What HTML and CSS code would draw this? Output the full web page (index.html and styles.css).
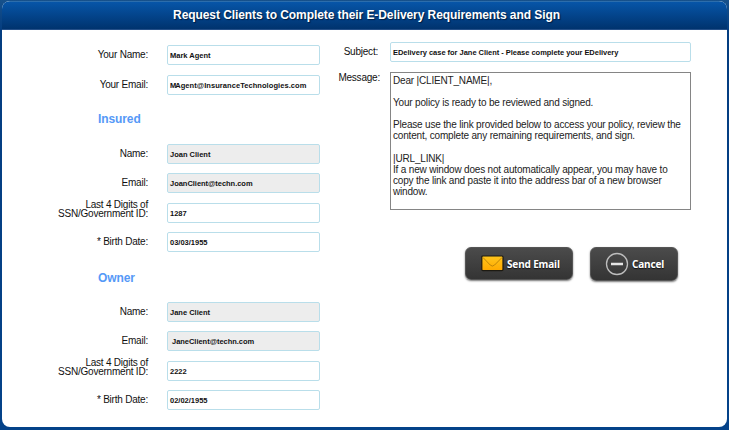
FILE: index.html
```html
<!DOCTYPE html>
<html lang="en">
<head>
<meta charset="utf-8">
<title>Request Clients</title>
<link rel="stylesheet" href="styles.css">
</head>
<body>
<main class="panel">
  <header class="title">Request Clients to Complete their E-Delivery Requirements and Sign</header>
  <div class="content">
    <section class="left">
      <div class="row"><span class="label">Your Name:</span><div class="field"><span class="name">Mark Agent</span></div></div>
      <div class="row"><span class="label">Your Email:</span><div class="field"><span class="agent-mail"><span class="tight">M</span>Agent@InsuranceTechnologies.com</span></div></div>
      <h2>Insured</h2>
      <div class="row"><span class="label">Name:</span><div class="field locked"><span class="name">Joan Client</span></div></div>
      <div class="row"><span class="label">Email:</span><div class="field locked"><span class="mail">JoanClient@techn.com</span></div></div>
      <div class="row"><span class="label two">Last 4 Digits of<br>SSN/Government ID:</span><div class="field"><span>1287</span></div></div>
      <div class="row"><span class="label">* Birth Date:</span><div class="field"><span class="date">03/03/1955</span></div></div>
      <h2 class="owner">Owner</h2>
      <div class="row"><span class="label">Name:</span><div class="field locked"><span class="name">Jane Client</span></div></div>
      <div class="row"><span class="label">Email:</span><div class="field locked indent"><span class="mail">JaneClient@techn.com</span></div></div>
      <div class="row"><span class="label two">Last 4 Digits of<br>SSN/Government ID:</span><div class="field"><span>2222</span></div></div>
      <div class="row"><span class="label">* Birth Date:</span><div class="field"><span class="date">02/02/1955</span></div></div>
    </section>
    <section class="right">
      <div class="subject-row"><span class="label subject-label">Subject:</span><div class="field subject"><span>EDelivery case for Jane Client - Please complete your EDelivery</span></div></div>
      <div class="message-row"><span class="label message-label">Message:</span>
<div class="message">Dear |CLIENT_NAME|,

Your policy is ready to be reviewed and signed.

Please use the link provided below to access your policy, review the
content, complete any remaining requirements, and sign.

|URL_LINK|
If a new window does not automatically appear, you may have to
copy the link and paste it into the address bar of a new browser
window.</div></div>
      <div class="actions">
        <button class="send" type="button">
          <svg width="23" height="17" viewBox="0 0 23 17">
            <defs><linearGradient id="gold" x1="0" y1="0" x2="0" y2="1"><stop offset="0" stop-color="#ffc51c"/><stop offset="1" stop-color="#ffa900"/></linearGradient></defs>
            <rect x=".8" y="1" width="21.2" height="14.6" rx="1" fill="url(#gold)" stroke="#1d1a12" stroke-width="1.2"/>
            <path d="M2 2.5L9.2 10Q11.4 12.2 13.600 10L21 2.500" fill="none" stroke="#b87f08" stroke-width=".9"/>
          </svg>
          <span>Send Email</span>
        </button>
        <button class="cancel" type="button">
          <svg width="24" height="24" viewBox="0 0 24 24"><circle cx="12" cy="12" r="10.500" fill="none" stroke="#bdbdbd" stroke-width="1.300"/><path d="M6 12H18" stroke="#e4e4e4" stroke-width="2.500"/></svg>
          <span>Cancel</span>
        </button>
      </div>
    </section>
  </div>
</main>
</body>
</html>
```
FILE: styles.css
```css
* { box-sizing: border-box; }
body {
  margin: 0;
  height: 430px;
  padding: 1px 2px 3px;
  overflow: hidden;
  background: linear-gradient(#17518b, #043d80 30px, #044289);
  font-family: "Liberation Sans", Arial, sans-serif;
  color: #222;
}
.panel {
  height: 426px;
  background: #fff;
  border-radius: 8px;
  overflow: hidden;
}
.title {
  height: 29px;
  border-top: 1px solid #2c6dac;
  border-bottom: 1px solid #244f88;
  background: linear-gradient(#0755a8, #00336e);
  color: #fff;
  font-size: 12px;
  font-weight: bold;
  letter-spacing: -.08px;
  line-height: 26px;
  text-align: center;
  text-shadow: 1px 1px 1px #001c40;
  padding-left: 4px;
  white-space: nowrap;
}
.content { display: flex; }
.left { width: 318px; padding-top: 15px; }
.row {
  display: grid;
  grid-template-columns: 146px 153px;
  column-gap: 19px;
  height: 29.6px;
}
.label {
  color: #111;
  font-size: 10px;
  letter-spacing: -.22px;
  line-height: 20px;
  text-align: right;
  white-space: nowrap;
}
.two { line-height: 9.500px; margin-top: -3px; }
.field {
  height: 20px;
  padding-left: 2px;
  border: 1px solid #b9deea;
  border-radius: 2px;
  background: #fff;
  font-size: 7.500px;
  font-weight: bold;
  line-height: 19px;
  white-space: nowrap;
  color: #111;
}
.locked { background: #ededed; }
.indent { padding-left: 4px; }
.agent-mail { letter-spacing: .06px; }
.mail { letter-spacing: -.03px; }
.tight { letter-spacing: -1px; }
h2 {
  height: 39.500px;
  margin: 0;
  padding-left: 96px;
  color: #5599f7;
  font-size: 12px;
  letter-spacing: -.1px;
  line-height: 31px;
}
.owner { line-height: 32px; }
.right { width: 371px; padding-top: 12px; }
.subject-row, .message-row { display: flex; }
.subject-row { height: 30px; }
.subject-label { width: 58px; margin-right: 12px; }
.subject { width: 301px; letter-spacing: -.03px; }
.message-label { width: 60px; margin-right: 10px; line-height: 12px; }
.message {
  width: 301px;
  height: 138px;
  padding: 2px;
  border: 1px solid #858585;
  font-size: 10px;
  letter-spacing: -.18px;
  line-height: 11.100px;
  white-space: pre;
}
.actions {
  display: flex;
  gap: 17px;
  margin: 37px 0 0 145px;
}
button {
  display: flex;
  align-items: center;
  border: 1px solid #555;
  border-radius: 6px;
  background: linear-gradient(#4b4b4b, #343434);
  box-shadow: 0 1px 2px #777;
  color: #fff;
  font: bold 10px "Noto Sans", sans-serif;
  letter-spacing: -.15px;
  white-space: nowrap;
  text-shadow: 0 1px 1px #111;
}
.send { width: 108px; height: 33px; padding: 0 0 0 15px; gap: 3px; }
.cancel { width: 88px; height: 34px; padding: 0 0 0 14px; gap: 3px; }
```
